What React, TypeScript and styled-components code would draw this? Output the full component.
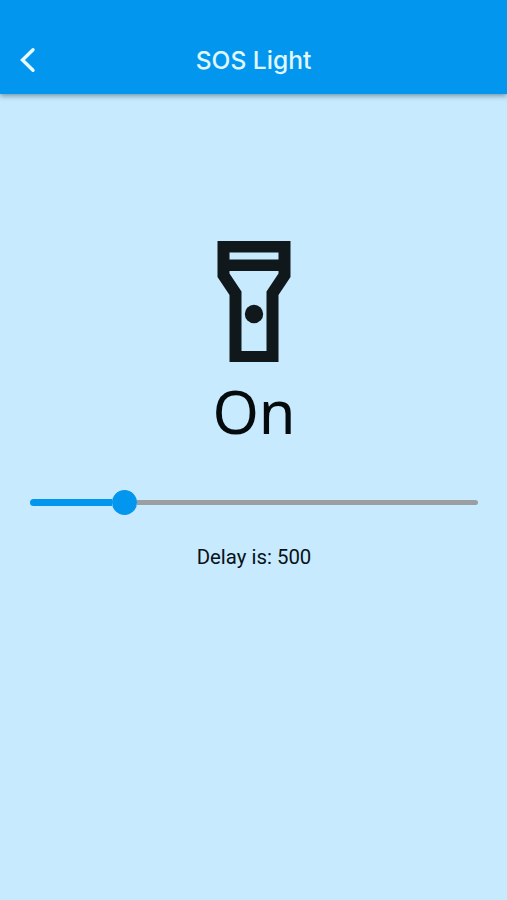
import React from 'react';
import styled, { createGlobalStyle } from 'styled-components';

const GlobalStyle = createGlobalStyle`
  body { margin: 0; background: #c7eafe; }
`;
const Screen = styled.div`
  height: 900px;
  display: flex;
  flex-direction: column;
  background: #c7eafe;
  font-family: Roboto, sans-serif;
  overflow: hidden;
`;
const AppBar = styled.header`
  height: 94px;
  box-sizing: border-box;
  padding: 26px 20px 0;
  display: grid;
  grid-template-columns: 40px 1fr 40px;
  align-items: center;
  background: #0296ee;
  box-shadow: 0 2px 5px rgba(0, 30, 50, 0.42);
`;
const BackButton = styled.button`
  border: 0;
  padding: 0;
  background: none;
  display: flex;
`;
const Title = styled.h1`
  margin: 0;
  text-align: center;
  font-family: Inter, sans-serif;
  font-size: 24.6px;
  line-height: 30px;
  font-weight: 550;
  color: #e0f7ff;
`;
const Main = styled.main`
  display: flex;
  flex-direction: column;
  align-items: center;
  padding: 147px 29px 0 30px;
`;
const State = styled.div`
  margin-top: 11px;
  font-family: "Noto Sans", sans-serif;
  font-size: 59.5px;
  line-height: 76px;
  color: #050a0d;
`;
const Slider = styled.div`
  width: 100%;
  height: 26px;
  margin-top: 40px;
  display: flex;
  align-items: center;
`;
const Filled = styled.div`
  width: 82px;
  height: 7px;
  border-radius: 4px 0 0 4px;
  background: #0296ee;
`;
const Thumb = styled.div`
  width: 25px;
  height: 25px;
  border-radius: 50%;
  background: #0296ee;
`;
const Rest = styled.div`
  flex: 1;
  height: 5px;
  border-radius: 0 3px 3px 0;
  background: #9b9fa1;
`;
const Delay = styled.div`
  margin-top: 30px;
  font-size: 20.4px;
  line-height: 24px;
  color: #081218;
`;

export default function App() {
  return (
    <Screen>
      <GlobalStyle />
      <AppBar>
        <BackButton aria-label="Back">
          <svg width="16" height="26" viewBox="0 0 16 26" fill="none" stroke="#e8faff" strokeWidth="3.4" strokeLinecap="round">
            <path d="M13 2.800 2.500 13l10.500 10.200" />
          </svg>
        </BackButton>
        <Title>SOS Light</Title>
      </AppBar>
      <Main>
        <svg width="74" height="121" viewBox="0 0 74 121">
          <path fillRule="evenodd" fill="#10181b" d="M0.500 0H73.500V36L61.500 54V121H12.500V54L0.500 36ZM12.500 11.500V18.500H61.500V11.500ZM12.500 30V32.500L24.500 50.500V110H49.500V50.500L61.500 32.500V30Z" />
          <circle cx="37" cy="73" r="9.200" fill="#10181b" />
        </svg>
        <State>On</State>
        <Slider>
          <Filled />
          <Thumb />
          <Rest />
        </Slider>
        <Delay>Delay is: 500</Delay>
      </Main>
    </Screen>
  );
}
